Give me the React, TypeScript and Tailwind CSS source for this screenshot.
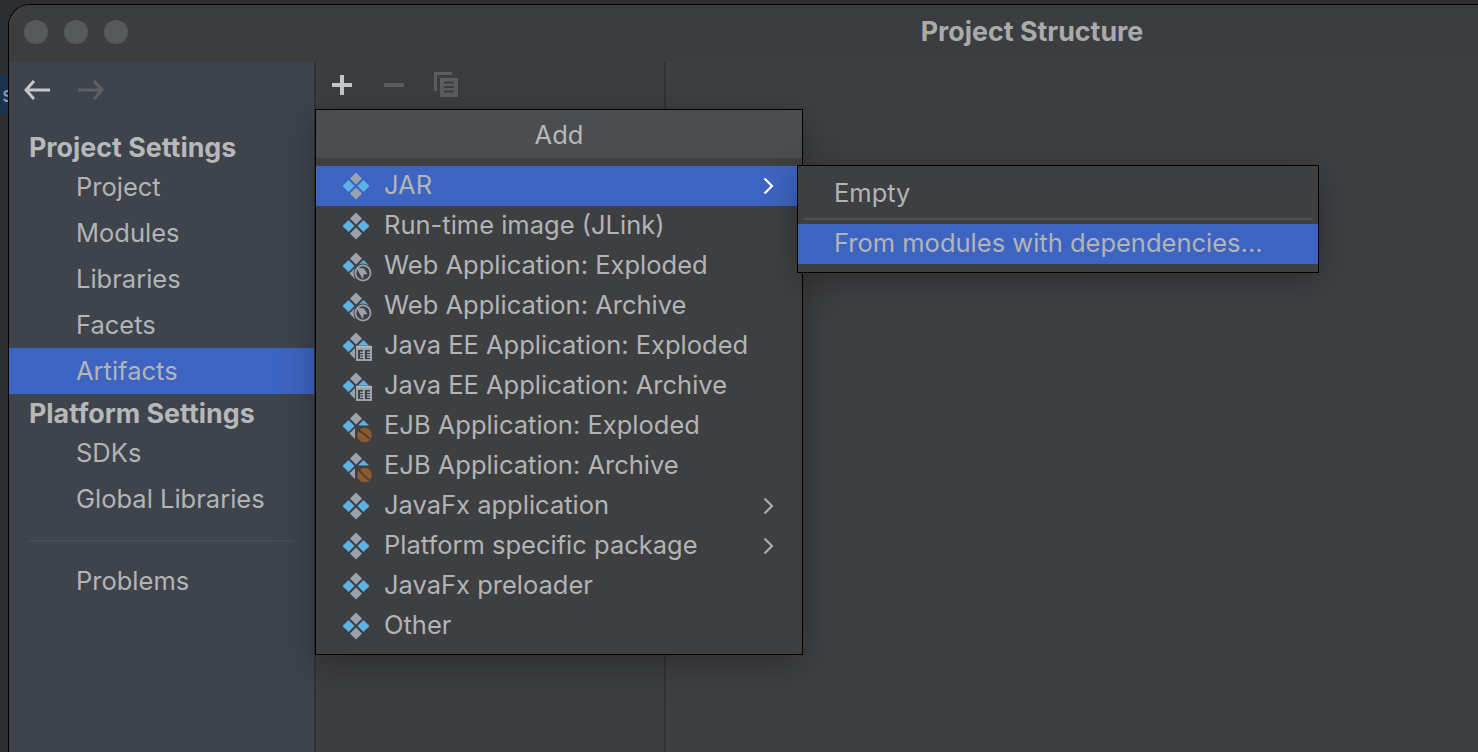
import React from "react";

const Grey = "#9aa2ad";
const Blue = "#5cb3e6";

function Diamonds({ variant }: { variant?: "web" | "ee" | "ejb" | "ejb2" }) {
  return (
    <svg width="30" height="30" viewBox="0 0 30 30" className="shrink-0 overflow-visible">
      <path d="M15 1.500 L21 7.500 L15 13.500 L9 7.500 Z" fill={Grey} />
      <path d="M7.500 9 L13.500 15 L7.500 21 L1.500 15 Z" fill={Blue} />
      {!variant && (
        <>
          <path d="M22.500 9 L28.500 15 L22.500 21 L16.500 15 Z" fill={Blue} />
          <path d="M15 16.500 L21 22.500 L15 28.500 L9 22.500 Z" fill={Grey} />
        </>
      )}
      {variant && (
        <>
          <path d="M22.500 9 L28 14.500 L17 14.500 Z" fill={Blue} />
          <path d="M14 17 L14 28 L8.500 22.500 Z" fill={Grey} />
        </>
      )}
      {variant === "web" && (
        <>
          <circle cx="22" cy="22" r="9.500" fill="#3e3f41" />
          <circle cx="22" cy="22" r="7.600" fill="none" stroke={Grey} strokeWidth="1.800" />
          <path d="M15.500 16.500 L23 17.500 L26.500 23 L22.500 23.500 L22 28.500 L18.500 22.500 Z" fill={Grey} />
        </>
      )}
      {variant === "ee" && (
        <>
          <rect x="15" y="16" width="16" height="14" fill={Grey} />
          <rect x="15" y="14.800" width="16" height="1.800" fill="#b5bac1" />
          <g fill="#3e3f41">
            <rect x="17" y="19" width="5" height="9" />
            <rect x="24" y="19" width="5" height="9" />
          </g>
          <g fill={Grey}>
            <rect x="19" y="20.500" width="3" height="1.500" />
            <rect x="19" y="23" width="3" height="1.500" />
            <rect x="19" y="25.500" width="3" height="1.500" />
            <rect x="26" y="20.500" width="3" height="1.500" />
            <rect x="26" y="23" width="3" height="1.500" />
            <rect x="26" y="25.500" width="3" height="1.500" />
          </g>
        </>
      )}
      {(variant === "ejb" || variant === "ejb2") && (
        <>
          <circle cx="23.500" cy="24" r="7.300" fill="#8a5a30" />
          <path
            d={variant === "ejb" ? "M17.500 19.500 Q23 22 29 28" : "M18 19 Q22 24 28 29"}
            stroke="#4d3822"
            strokeWidth="1.500"
            fill="none"
          />
        </>
      )}
    </svg>
  );
}

function Chevron({ color }: { color: string }) {
  return (
    <svg width="14" height="20" viewBox="0 0 14 20" className="shrink-0">
      <path d="M2.500 2.500 L10 10 L2.500 17.500" fill="none" stroke={color} strokeWidth="2.200" />
    </svg>
  );
}

function SideItem({ label, active }: { label: string; active?: boolean }) {
  return (
    <div className={`h-[46px] pl-[67px] flex items-center ${active ? "bg-[#3d64c0]" : ""}`}>
      {label}
    </div>
  );
}

function MenuRow({
  label,
  variant,
  active,
  sub,
}: {
  label: string;
  variant?: "web" | "ee" | "ejb" | "ejb2";
  active?: boolean;
  sub?: boolean;
}) {
  return (
    <div className={`h-10 flex items-center pl-[25px] pr-[26px] ${active ? "bg-[#3d64c0]" : ""}`}>
      <Diamonds variant={variant} />
      <span className="ml-[13px] -mt-[2px] flex-1 whitespace-nowrap">{label}</span>
      {sub && <Chevron color={active ? "#ffffff" : "#a9adb1"} />}
    </div>
  );
}

export default function App() {
  return (
    <div className="relative w-[1478px] h-[752px] overflow-hidden bg-[#2c2e31] pt-1 pl-2 font-['Inter',_'Liberation_Sans',_sans-serif] text-[25.500px] text-[#b2b4b6]">
      <div className="absolute left-0 top-[74px] w-2 h-10 bg-[#1c3350] overflow-hidden text-[#8fa0b3] text-[22px] leading-10">
        <span className="ml-[2px]">s</span>
      </div>
      <div className="h-full flex flex-col bg-[#3e3f41] rounded-tl-[22px] border-t border-l border-black overflow-hidden shadow-[inset_1px_1px_0_#5a5b5d]">
        <div className="h-[57px] shrink-0 flex items-center pl-[15px] gap-4 pb-[3px] bg-[#3c3d3f]">
          <span className="w-6 h-6 rounded-full bg-[#58595b]" />
          <span className="w-6 h-6 rounded-full bg-[#58595b]" />
          <span className="w-6 h-6 rounded-full bg-[#58595b]" />
          <div className="flex-1 -mt-[2px] text-center font-bold text-[#a8aaac] pl-[442px] text-[26.800px]">
            Project Structure
          </div>
        </div>
        <div className="flex-1 flex min-h-0">
          <div className="w-[305px] shrink-0 bg-[#3e434c] flex flex-col">
            <div className="h-[56px] shrink-0 flex items-center pl-[15px] gap-[28px]">
              <svg width="26" height="20" viewBox="0 0 26 20">
                <path d="M10 1 L2 10 L10 19 M2 10 L26 10" fill="none" stroke="#c4c6c9" strokeWidth="3" />
              </svg>
              <svg width="26" height="20" viewBox="0 0 26 20">
                <path d="M16 1 L24 10 L16 19 M24 10 L0 10" fill="none" stroke="#5d6064" strokeWidth="3" />
              </svg>
            </div>
            <div className="h-[58px] pl-5 flex items-center font-bold text-[26.800px] text-[#b6b8ba]">Project Settings</div>
            <div className="-mt-[12px]">
              <SideItem label="Project" />
              <SideItem label="Modules" />
              <SideItem label="Libraries" />
              <SideItem label="Facets" />
              <SideItem label="Artifacts" active />
            </div>
            <div className="h-[38px] pl-5 flex items-center font-bold text-[26.800px] text-[#b6b8ba]">Platform Settings</div>
            <div className="-mt-[2px]">
              <SideItem label="SDKs" />
              <SideItem label="Global Libraries" />
            </div>
            <div className="h-[2px] bg-[#474b53] ml-[20px] mr-5 mt-[18px] mb-[16px]" />
            <SideItem label="Problems" />
          </div>
          <div className="w-[2px] shrink-0 bg-[#303234]" />
          <div className="w-[348px] shrink-0 pt-[7px] bg-[#3c3d3f]">
            <div className="flex items-center h-[32px] pl-[15px]">
              <svg width="22" height="22" viewBox="0 0 22 22">
                <path d="M11 1 V21 M1 11 H21" stroke="#c4c6c9" strokeWidth="4" fill="none" />
              </svg>
              <svg width="22" height="22" viewBox="0 0 22 22" className="ml-[30px]">
                <path d="M1 11 H21" stroke="#5b5d60" strokeWidth="4" fill="none" />
              </svg>
              <svg width="26" height="28" viewBox="0 0 26 28" className="ml-[28px]">
                <path d="M1 1 H19 V4 H4 V20 H1 Z" fill="#5b5d60" />
                <rect x="7" y="7" width="18" height="19" fill="#5b5d60" />
                <path d="M11 11.500 H21 M11 16 H21 M11 20.500 H21" stroke="#3c3d3f" strokeWidth="2" />
              </svg>
            </div>
          </div>
          <div className="w-[2px] shrink-0 bg-[#303234]" />
          <div className="flex-1" />
        </div>
      </div>

      <div className="absolute left-[315px] top-[109px] w-[488px] h-[546px] bg-[#3e3f41] border border-black shadow-[0_8px_32px_rgba(0,0,0,0.28)]">
        <div className="h-[48px] pt-[2px] bg-[#4b4e50] flex items-center justify-center text-[#b6b8ba]">Add</div>
        <div className="h-2" />
        <MenuRow label="JAR" active sub />
        <MenuRow label="Run-time image (JLink)" />
        <MenuRow label="Web Application: Exploded" variant="web" />
        <MenuRow label="Web Application: Archive" variant="web" />
        <MenuRow label="Java EE Application: Exploded" variant="ee" />
        <MenuRow label="Java EE Application: Archive" variant="ee" />
        <MenuRow label="EJB Application: Exploded" variant="ejb" />
        <MenuRow label="EJB Application: Archive" variant="ejb2" />
        <MenuRow label="JavaFx application" sub />
        <MenuRow label="Platform specific package" sub />
        <MenuRow label="JavaFx preloader" />
        <MenuRow label="Other" />
      </div>

      <div className="absolute left-[797px] top-[165px] w-[522px] h-[108px] bg-[#3e3f41] border border-black shadow-[0_8px_32px_rgba(0,0,0,0.28)]">
        <div className="h-[52px] pt-[3px] pl-[36px] flex items-center">Empty</div>
        <div className="h-[2px] bg-[#505254] ml-[6px] mr-[6px]" />
        <div className="mt-[4px] h-10 pb-[2px] pl-[36px] flex items-center bg-[#3d64c0]">From modules with dependencies...</div>
      </div>
    </div>
  );
}
